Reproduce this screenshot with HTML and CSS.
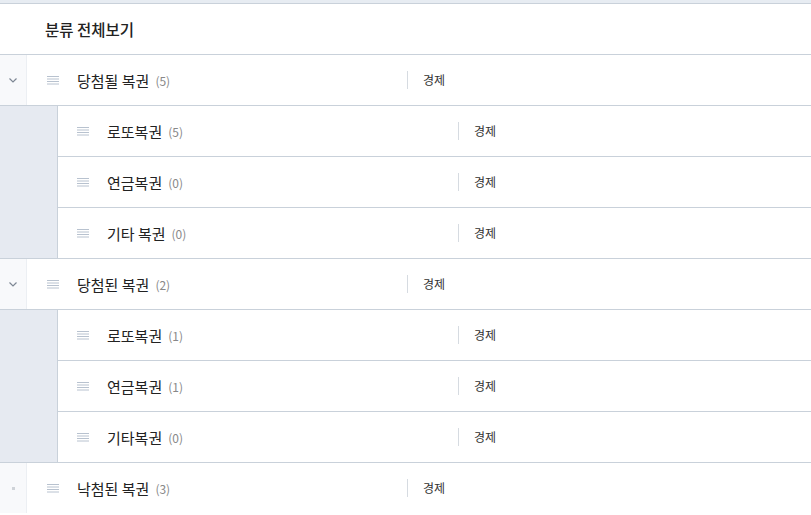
FILE: index.html
```html
<!DOCTYPE html>
<html>
  <head>
    <title>분류 관리</title>
    <link rel="stylesheet" href="styles.css">
  </head>
  <body>
    <div class="top-band"></div>
    <div class="all-row">분류 전체보기</div>

    <div class="group">
      <div class="group-head">
        <div class="toggle">
          <svg width="8" height="5" viewBox="0 0 8 5"><polyline points="0.5,0.5 4,4 7.5,0.5" fill="none" stroke="#7d8794" stroke-width="1.2"/></svg>
        </div>
        <div class="name-cell">
          <svg class="drag" width="12" height="9" viewBox="0 0 12 9"><path d="M0 0.5H12M0 3H12M0 5.5H12M0 8H12" stroke="#b8c2cf" stroke-width="1"/></svg>
          <span class="name">당첨될 복권</span><span class="count">(5)</span>
        </div>
        <div class="tag">경제</div>
      </div>
      <div class="children">
        <div class="indent"></div>
        <div class="child-list">
          <div class="child">
            <div class="name-cell">
              <svg class="drag" width="12" height="9" viewBox="0 0 12 9"><path d="M0 0.5H12M0 3H12M0 5.5H12M0 8H12" stroke="#b8c2cf" stroke-width="1"/></svg>
              <span class="name">로또복권</span><span class="count">(5)</span>
            </div>
            <div class="tag">경제</div>
          </div>
          <div class="child">
            <div class="name-cell">
              <svg class="drag" width="12" height="9" viewBox="0 0 12 9"><path d="M0 0.5H12M0 3H12M0 5.5H12M0 8H12" stroke="#b8c2cf" stroke-width="1"/></svg>
              <span class="name">연금복권</span><span class="count">(0)</span>
            </div>
            <div class="tag">경제</div>
          </div>
          <div class="child">
            <div class="name-cell">
              <svg class="drag" width="12" height="9" viewBox="0 0 12 9"><path d="M0 0.5H12M0 3H12M0 5.5H12M0 8H12" stroke="#b8c2cf" stroke-width="1"/></svg>
              <span class="name">기타 복권</span><span class="count">(0)</span>
            </div>
            <div class="tag">경제</div>
          </div>
        </div>
      </div>
    </div>

    <div class="group">
      <div class="group-head">
        <div class="toggle">
          <svg width="8" height="5" viewBox="0 0 8 5"><polyline points="0.5,0.5 4,4 7.5,0.5" fill="none" stroke="#7d8794" stroke-width="1.2"/></svg>
        </div>
        <div class="name-cell">
          <svg class="drag" width="12" height="9" viewBox="0 0 12 9"><path d="M0 0.5H12M0 3H12M0 5.5H12M0 8H12" stroke="#b8c2cf" stroke-width="1"/></svg>
          <span class="name">당첨된 복권</span><span class="count">(2)</span>
        </div>
        <div class="tag">경제</div>
      </div>
      <div class="children">
        <div class="indent"></div>
        <div class="child-list">
          <div class="child">
            <div class="name-cell">
              <svg class="drag" width="12" height="9" viewBox="0 0 12 9"><path d="M0 0.5H12M0 3H12M0 5.5H12M0 8H12" stroke="#b8c2cf" stroke-width="1"/></svg>
              <span class="name">로또복권</span><span class="count">(1)</span>
            </div>
            <div class="tag">경제</div>
          </div>
          <div class="child">
            <div class="name-cell">
              <svg class="drag" width="12" height="9" viewBox="0 0 12 9"><path d="M0 0.5H12M0 3H12M0 5.5H12M0 8H12" stroke="#b8c2cf" stroke-width="1"/></svg>
              <span class="name">연금복권</span><span class="count">(1)</span>
            </div>
            <div class="tag">경제</div>
          </div>
          <div class="child">
            <div class="name-cell">
              <svg class="drag" width="12" height="9" viewBox="0 0 12 9"><path d="M0 0.5H12M0 3H12M0 5.5H12M0 8H12" stroke="#b8c2cf" stroke-width="1"/></svg>
              <span class="name">기타복권</span><span class="count">(0)</span>
            </div>
            <div class="tag">경제</div>
          </div>
        </div>
      </div>
    </div>

    <div class="group last">
      <div class="group-head">
        <div class="toggle"><span class="dot"></span></div>
        <div class="name-cell">
          <svg class="drag" width="12" height="9" viewBox="0 0 12 9"><path d="M0 0.5H12M0 3H12M0 5.5H12M0 8H12" stroke="#b8c2cf" stroke-width="1"/></svg>
          <span class="name">낙첨된 복권</span><span class="count">(3)</span>
        </div>
        <div class="tag">경제</div>
      </div>
    </div>
  </body>
</html>
```

FILE: styles.css
```css
body {
  margin: 0;
  font-family: "Noto Sans CJK KR", "Noto Sans", sans-serif;
  color: #222;
  background: #fff;
}

.top-band {
  height: 3px;
  background-color: #e7ecf2;
  border-bottom: 1px solid #c9d1da;
}

.all-row {
  height: 50px;
  display: flex;
  align-items: center;
  padding-left: 45px;
  font-size: 15.5px;
  font-weight: 500;
  border-bottom: 1px solid #c9d1da;
}

.group {
  border-bottom: 1px solid #c9d1da;
}

.group.last {
  border-bottom: none;
}

.group-head {
  height: 50px;
  display: flex;
  align-items: center;
  border-bottom: 1px solid #c9d1da;
}

.group.last .group-head {
  border-bottom: none;
}

.toggle {
  width: 26px;
  height: 100%;
  background-color: #f8f9fb;
  border-right: 1px solid #eceff3;
  display: flex;
  align-items: center;
  justify-content: center;
}

.dot {
  width: 3px;
  height: 3px;
  background-color: #cfd3d8;
}

.name-cell {
  display: flex;
  align-items: center;
  width: 360px;
  padding-left: 20px;
}

.drag {
  margin-right: 18px;
  flex-shrink: 0;
}

.name {
  font-size: 15px;
  color: #222;
}

.count {
  font-size: 12px;
  color: #888;
  margin-left: 6px;
}

.tag {
  font-size: 12px;
  color: #333;
  border-left: 1px solid #d6dbe1;
  padding-left: 15px;
  line-height: 18px;
}

.children {
  display: flex;
}

.indent {
  width: 57px;
  background-color: #e6eaf1;
  border-right: 1px solid #c9d1da;
}

.child-list {
  flex: 1;
}

.child {
  height: 50px;
  display: flex;
  align-items: center;
}

.child + .child {
  border-top: 1px solid #c9d1da;
}

.child .name-cell {
  width: 381px;
  padding-left: 19px;
}
```
